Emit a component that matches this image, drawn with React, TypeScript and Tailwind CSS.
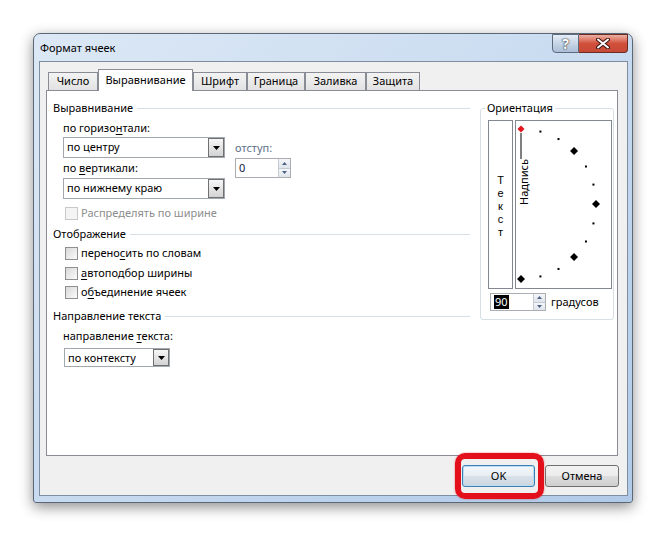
import React from 'react';

const Arrow = () => (
  <svg width="7" height="4" viewBox="0 0 7 4">
    <path d="M0 0h7L3.5 4z" fill="#000" />
  </svg>
);

const Combo = ({ value, w, h }: { value: string; w: string; h: string }) => (
  <div className={`flex ${w} ${h} border border-[#a3a7ae] bg-white`}>
    <span className="flex-1 pl-[3px] leading-[17px]">{value}</span>
    <span className="flex w-[16px] items-center justify-center border border-[#707070] bg-gradient-to-b from-[#f7f7f7] to-[#d3d3d3]">
      <Arrow />
    </span>
  </div>
);

const Spin = ({ value, selected, w, h }: { value: string; selected?: boolean; w: string; h: string }) => (
  <div className={`flex ${w} ${h} border border-[#abadb3] bg-white`}>
    <span className="flex-1 pl-[3px] flex items-center">
      {selected ? <span className="bg-black text-white px-px leading-[14px]">{value}</span> : <span className="text-[#102040]">{value}</span>}
    </span>
    <span className="flex flex-col w-[12px] border-l border-[#c6cbd3]">
      <span className="flex-1 flex items-center justify-center border-b border-[#c6cbd3] bg-gradient-to-b from-[#f4f6f9] to-[#dfe5ec]">
        <svg width="5" height="3" viewBox="0 0 5 3"><path d="M0 3h5L2.5 0z" fill="#4d6185" /></svg>
      </span>
      <span className="flex-1 flex items-center justify-center bg-gradient-to-b from-[#f4f6f9] to-[#dfe5ec]">
        <svg width="5" height="3" viewBox="0 0 5 3"><path d="M0 0h5L2.5 3z" fill="#4d6185" /></svg>
      </span>
    </span>
  </div>
);

const Check = ({ children, disabled, mt }: { children: React.ReactNode; disabled?: boolean; mt: string }) => (
  <div className={`flex items-center h-[16px] ${mt} pl-[12px]`}>
    <span
      className={`w-[13px] h-[13px] border ${
        disabled ? 'border-[#c8c8c8] bg-[#f4f4f4]' : 'border-[#8e8f8f] bg-gradient-to-br from-[#d8d8d8] to-[#fbfbfb]'
      }`}
    />
    <span className={`ml-[3px] leading-[16px] ${disabled ? 'text-[#8d8d8d]' : ''}`}>{children}</span>
  </div>
);

const Header = ({ title, mt }: { title: string; mt: string }) => (
  <div className={`flex items-center h-[16px] ${mt}`}>
    <span className="leading-[16px]">{title}</span>
    <span className="flex-1 ml-[4px] h-px bg-[#d5dfe5]" />
  </div>
);

const tabs = [
  { label: 'Число', w: 'w-[50px]' },
  { label: 'Выравнивание', w: 'w-[95px]', active: true },
  { label: 'Шрифт', w: 'w-[54px]' },
  { label: 'Граница', w: 'w-[58px]' },
  { label: 'Заливка', w: 'w-[61px]' },
  { label: 'Защита', w: 'w-[54px]' },
];

const angles = [90, 75, 60, 45, 30, 15, 0, -15, -30, -45, -60, -75, -90];

const App: React.FC = () => {
  return (
    <div className="w-[666px] h-[535px] bg-white pt-[33px] pl-[33px] font-['Noto_Sans',sans-serif] text-[11px] text-black">
      <div className="w-[600px] h-[470px] rounded-t-[7px] rounded-b-[3px] border border-[#5a6877] bg-gradient-to-br from-[#dce8f5] via-[#c8dbf0] to-[#b0cae8] shadow-[0_4px_14px_rgba(0,0,0,0.45)]">
        {/* title bar */}
        <div className="flex h-[27px] justify-between">
          <span className="pl-[6px] pt-[6px] leading-[16px]">Формат ячеек</span>
          <div className="flex mr-[4px] h-[19px]">
            <span className="w-[27px] h-full flex items-center justify-center rounded-bl-[4px] border border-[#5d6b7c] bg-gradient-to-b from-[#e6eef8] via-[#c7d5e6] to-[#aabfd8] text-white font-bold text-[14px] [text-shadow:0_0_1px_#222,0_0_2px_#333]">
              ?
            </span>
            <span className="w-[49px] h-full flex items-center justify-center rounded-br-[4px] border border-l-0 border-[#6b2a22] bg-gradient-to-b from-[#eab0a3] via-[#d24f3b] to-[#c64a36]">
              <svg width="14" height="11" viewBox="0 0 14 11">
                <path d="M2 1.5l10 8M12 1.5l-10 8" stroke="#3b1510" strokeWidth="4" strokeLinecap="round" />
                <path d="M2 1.5l10 8M12 1.5l-10 8" stroke="#fff" strokeWidth="2" strokeLinecap="round" />
              </svg>
            </span>
          </div>
        </div>

        {/* client */}
        <div className="ml-[5px] w-[589px] h-[435px] border border-[#7f8e9e] bg-[#f0f0f0]">
          <div className="ml-[6px] pt-[7px]">
            <div className="flex items-end h-[21px] pl-[2px]">
              {tabs.map((t) =>
                t.active ? (
                  <div
                    key={t.label}
                    className={`${t.w} h-[22px] -mb-px relative z-10 flex items-center justify-center border border-b-0 border-[#898c95] bg-white`}
                  >
                    {t.label}
                  </div>
                ) : (
                  <div
                    key={t.label}
                    className={`${t.w} h-[18px] flex items-center justify-center border border-b-0 border-[#898c95] bg-gradient-to-b from-[#f3f3f3] to-[#e2e2e2]`}
                  >
                    {t.label}
                  </div>
                )
              )}
            </div>

            {/* panel */}
            <div className="w-[572px] h-[366px] border border-[#898c95] bg-white flex">
              <div className="w-[423px] pl-[6px] flex flex-col">
                <Header title="Выравнивание" mt="mt-[9px]" />
                <div className="flex pl-[10px]">
                  <div className="w-[162px] flex flex-col">
                    <div className="mt-[4px] h-[16px] leading-[16px]">
                      по горизо<u className="underline-offset-2">н</u>тали:
                    </div>
                    <div className="mt-[1px]">
                      <Combo value="по центру" w="w-[162px]" h="h-[21px]" />
                    </div>
                    <div className="mt-[2px] h-[16px] leading-[16px]">
                      по <u className="underline-offset-2">в</u>ертикали:
                    </div>
                    <div className="mt-[2px]">
                      <Combo value="по нижнему краю" w="w-[162px]" h="h-[21px]" />
                    </div>
                  </div>
                  <div className="ml-[10px] flex flex-col">
                    <div className="mt-[24px] h-[16px] leading-[16px] text-[#5d6f86]">отступ:</div>
                    <div className="mt-[2px]">
                      <Spin value="0" w="w-[56px]" h="h-[20px]" />
                    </div>
                  </div>
                </div>
                <Check disabled mt="mt-[6px]">
                  Распределять по ширине
                </Check>

                <Header title="Отображение" mt="mt-[5px]" />
                <Check mt="mt-[3px]">
                  перено<u className="underline-offset-2">с</u>ить по словам
                </Check>
                <Check mt="mt-[4px]">
                  <u className="underline-offset-2">а</u>втоподбор ширины
                </Check>
                <Check mt="mt-[3px]">
                  о<u className="underline-offset-2">б</u>ъединение ячеек
                </Check>

                <Header title="Направление текста" mt="mt-[8px]" />
                <div className="mt-[4px] pl-[10px] h-[16px] leading-[16px]">
                  направление <u className="underline-offset-2">т</u>екста:
                </div>
                <div className="mt-[4px] pl-[11px]">
                  <Combo value="по контексту" w="w-[106px]" h="h-[19px]" />
                </div>
              </div>

              {/* orientation */}
              <fieldset className="ml-[10px] mt-[9px] w-[134px] self-start rounded-[3px] border border-[#d5dfe5] pl-[7px] pb-[8px]">
                <legend className="ml-[-3px] px-[2px] leading-[16px]">Ориентация</legend>
                <div className="flex mt-[4px]">
                  <div className="w-[25px] h-[169px] border border-[#828790] flex flex-col items-center justify-center pt-[3px] font-['Liberation_Sans',sans-serif]">
                    {['Т', 'е', 'к', 'с', 'т'].map((c, i) => (
                      <span key={i} className="leading-[13px]">
                        {c}
                      </span>
                    ))}
                  </div>
                  <div className="ml-[2px] w-[97px] h-[169px] border border-[#828790]">
                    <svg width="95" height="167" viewBox="0 0 95 167">
                      <line x1="5" y1="12" x2="5" y2="38" stroke="#000" strokeWidth="1" />
                      <text
                        transform="translate(11.5 84) rotate(-90)"
                        fontFamily="Noto Sans, sans-serif"
                        fontSize="11"
                        fill="#000"
                      >
                        Надпись
                      </text>
                      {angles.map((a) => {
                        const x = 5 + 75 * Math.cos((a * Math.PI) / 180);
                        const y = 83 - 75 * Math.sin((a * Math.PI) / 180);
                        if (a % 45 === 0) {
                          const r = a === 90 ? 3.5 : 4;
                          return (
                            <polygon
                              key={a}
                              points={`${x},${y - r} ${x + r},${y} ${x},${y + r} ${x - r},${y}`}
                              fill={a === 90 ? '#e8141c' : '#000'}
                            />
                          );
                        }
                        return <rect key={a} x={x - 1} y={y - 1} width="2" height="2" fill="#000" />;
                      })}
                    </svg>
                  </div>
                </div>
                <div className="flex items-center mt-[4px] ml-[2px]">
                  <Spin value="90" selected w="w-[56px]" h="h-[18px]" />
                  <span className="ml-[5px] leading-[16px]">градусов</span>
                </div>
              </fieldset>
            </div>

            {/* buttons */}
            <div className="flex justify-end gap-[10px] mt-[9px] pr-[8px]">
              <div className="relative">
                <span className="absolute -left-[7px] -right-[9px] -top-[12px] -bottom-[12px] rounded-[10px] border-[6px] border-[#e3101c] shadow-[0_0_2px_rgba(227,16,28,0.6)]" />
                <button className="w-[73px] h-[22px] rounded-[3px] border border-[#3c7fb1] bg-[linear-gradient(#f2f7fb_0%,#e8eef3_50%,#d9e2ea_51%,#cdd6df_100%)] shadow-[inset_0_0_0_1px_#b8dcf5]">
                  OK
                </button>
              </div>
              <button className="w-[74px] h-[22px] rounded-[3px] border border-[#707070] bg-[linear-gradient(#f2f2f2_0%,#ebebeb_50%,#dddddd_51%,#cfcfcf_100%)]">
                Отмена
              </button>
            </div>
          </div>
        </div>
      </div>
    </div>
  );
};

export default App;
